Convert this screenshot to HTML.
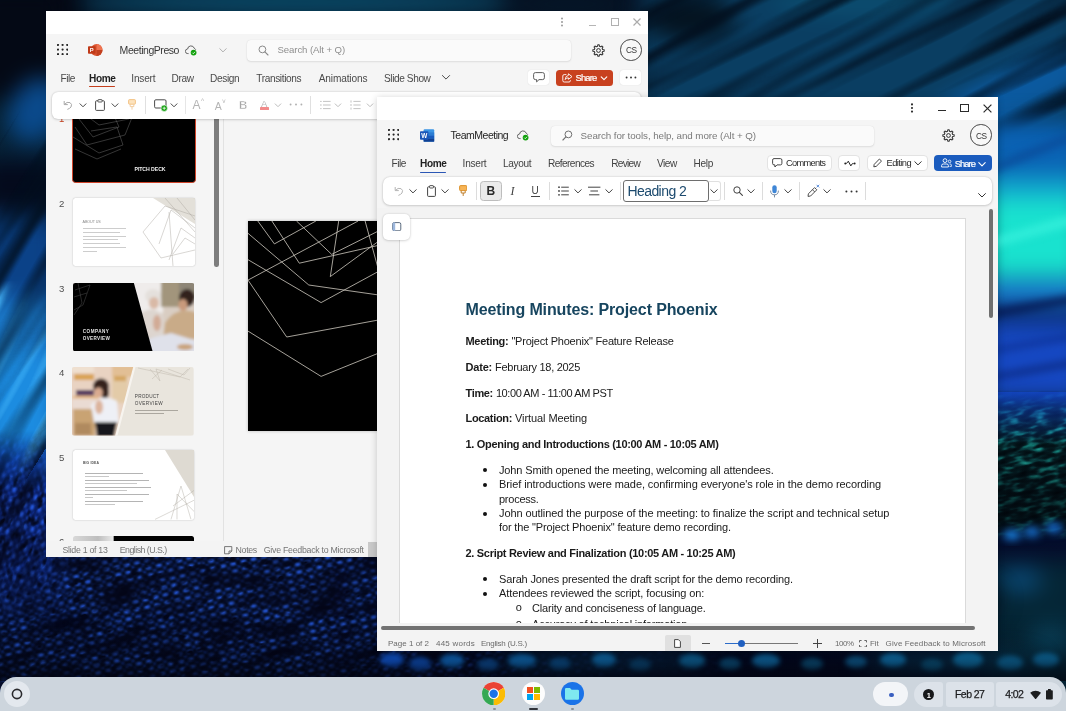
<!DOCTYPE html>
<html><head><meta charset="utf-8">
<style>
*{box-sizing:border-box;margin:0;padding:0}
html,body{width:1066px;height:711px;overflow:hidden;background:#021826}
body{font-family:"Liberation Sans",sans-serif;position:relative;color:#242424}
.abs,.t{position:absolute}
.t{white-space:nowrap;line-height:1}
#ppt,#word,#shelf{will-change:transform}
#wall{position:absolute;left:0;top:0;width:1066px;height:711px;overflow:hidden;background:#03131f}
/* windows */
#ppt{position:absolute;left:46px;top:11px;width:602px;height:545.8px;background:#f5f5f5;overflow:hidden}
#word{position:absolute;left:377px;top:97px;width:621px;height:554px;background:#f5f5f5;overflow:hidden;box-shadow:0 1px 7px rgba(0,0,0,.2)}
.tb{position:absolute;left:0;top:0;width:100%;height:23px;background:#fff}
#shelf{position:absolute;left:0;top:677px;width:1066px;height:34px;background:#cdd5dd;border-radius:16px 16px 0 0}
</style></head><body>
<div id="wall">
<svg class="abs" style="left:0;top:0" width="1066" height="711" viewBox="0 0 1066 711" color-interpolation-filters="sRGB">
<defs>
<filter id="b12" x="-30%" y="-30%" width="160%" height="160%"><feGaussianBlur stdDeviation="11"/></filter>
<filter id="b7" x="-30%" y="-30%" width="160%" height="160%"><feGaussianBlur stdDeviation="7"/></filter>
<filter id="b25" x="-30%" y="-30%" width="160%" height="160%"><feGaussianBlur stdDeviation="2.6"/></filter>
<filter id="b4" x="-30%" y="-30%" width="160%" height="160%"><feGaussianBlur stdDeviation="4"/></filter>
<filter id="b1" x="-5%" y="-5%" width="110%" height="110%"><feGaussianBlur stdDeviation="1.2"/></filter>
<!-- irregular dark patches overlay -->
<filter id="fpatch" x="0" y="0" width="100%" height="100%">
<feTurbulence type="fractalNoise" baseFrequency="0.02 0.06" numOctaves="3" seed="7"/>
<feColorMatrix type="matrix" values="0 0 0 0 0.012  0 0 0 0 0.02  0 0 0 0 0.09  2.4 0 0 0 -0.95"/>
</filter>
<filter id="fpatch2" x="0" y="0" width="100%" height="100%">
<feTurbulence type="fractalNoise" baseFrequency="0.1 0.17" numOctaves="2" seed="21"/>
<feColorMatrix type="matrix" values="0 0 0 0 0.012  0 0 0 0 0.025  0 0 0 0 0.1  3.2 0 0 0 -1.45"/>
</filter>
<!-- teal/green specks on black -->
<filter id="fspeck" x="0" y="0" width="100%" height="100%">
<feTurbulence type="fractalNoise" baseFrequency="0.07 0.2" numOctaves="2" seed="3"/>
<feColorMatrix type="matrix" values="1 0 0 0 0  1 0 0 0 0  1 0 0 0 0  0 0 0 0 1"/>
<feComponentTransfer>
<feFuncR type="table" tableValues="0 0 0 0.01 0.015 0.02 0.04 0.07 0.12 0.16 0.16"/>
<feFuncG type="table" tableValues="0.01 0.02 0.04 0.06 0.08 0.12 0.27 0.46 0.62 0.75 0.8"/>
<feFuncB type="table" tableValues="0.02 0.03 0.06 0.08 0.10 0.14 0.28 0.44 0.58 0.7 0.75"/>
</feComponentTransfer>
<feGaussianBlur stdDeviation=".6"/>
</filter>
<!-- dark streak overlay (long thin noise) -->
<filter id="fstreak" x="0" y="0" width="100%" height="100%">
<feTurbulence type="fractalNoise" baseFrequency="0.003 0.05" numOctaves="2" seed="11"/>
<feColorMatrix type="matrix" values="0 0 0 0 0.01  0 0 0 0 0.06  0 0 0 0 0.12  2.6 0 0 0 -1.05"/>
</filter>
<filter id="fstreakL" x="0" y="0" width="100%" height="100%">
<feTurbulence type="fractalNoise" baseFrequency="0.003 0.06" numOctaves="2" seed="5"/>
<feColorMatrix type="matrix" values="0 0 0 0 0.3  0 0 0 0 0.75  0 0 0 0 1  3.4 0 0 0 -1.7"/>
</filter>
<pattern id="dots" width="10.4" height="7.6" patternUnits="userSpaceOnUse"><ellipse cx="3.6" cy="2.4" rx="3.2" ry="1.7" fill="#2a64fa"/><ellipse cx="8.8" cy="6.2" rx="1.9" ry="1.1" fill="#1a46cc"/></pattern>
<linearGradient id="bg" x1="0" y1="0" x2="0" y2="1"><stop offset="0" stop-color="#050c1c"/><stop offset=".14" stop-color="#06202f"/><stop offset=".5" stop-color="#082a5c"/><stop offset=".76" stop-color="#050c2c"/><stop offset="1" stop-color="#03081c"/></linearGradient>
<linearGradient id="fadeB" x1="0" y1="0" x2="0" y2="1"><stop offset="0" stop-color="#02040e" stop-opacity="0"/><stop offset=".6" stop-color="#02040e" stop-opacity=".3"/><stop offset="1" stop-color="#02040e" stop-opacity=".92"/></linearGradient>
<linearGradient id="gR" x1="0" y1="0" x2="1" y2="0"><stop offset="0" stop-color="#fff"/><stop offset=".3" stop-color="#fff"/><stop offset=".42" stop-color="#fff" stop-opacity=".6"/><stop offset=".58" stop-color="#fff" stop-opacity=".15"/><stop offset=".75" stop-color="#fff" stop-opacity="0"/></linearGradient>
<linearGradient id="gLT" x1="0" y1="0" x2="0" y2="1"><stop offset="0" stop-color="#fff" stop-opacity="0"/><stop offset=".22" stop-color="#fff"/><stop offset=".45" stop-color="#fff"/><stop offset=".72" stop-color="#fff" stop-opacity="0"/><stop offset="1" stop-color="#fff" stop-opacity="0"/></linearGradient>
<linearGradient id="gSp" x1="0" y1="0" x2="0" y2="1"><stop offset="0" stop-color="#fff" stop-opacity="0"/><stop offset=".12" stop-color="#fff"/><stop offset=".86" stop-color="#fff"/><stop offset="1" stop-color="#fff" stop-opacity="0"/></linearGradient>
<linearGradient id="gTR" x1="0" y1="0" x2="0" y2="1"><stop offset="0" stop-color="#fff"/><stop offset=".65" stop-color="#fff"/><stop offset="1" stop-color="#fff" stop-opacity="0"/></linearGradient>
<linearGradient id="gDk" x1="0" y1="0" x2="0" y2="1"><stop offset="0" stop-color="#02060c" stop-opacity="0"/><stop offset=".6" stop-color="#02060c" stop-opacity=".6"/><stop offset=".85" stop-color="#02060c" stop-opacity=".5"/><stop offset="1" stop-color="#02060c" stop-opacity="0"/></linearGradient>
<linearGradient id="gBl" x1="0" y1="0" x2="0" y2="1"><stop offset="0" stop-color="#1246c8" stop-opacity=".75"/><stop offset="1" stop-color="#1246c8" stop-opacity="0"/></linearGradient>
<mask id="mBot" maskUnits="userSpaceOnUse" x="0" y="500" width="1066" height="211"><rect x="0" y="500" width="1066" height="211" fill="url(#gR)"/></mask>
<mask id="mLeft" maskUnits="userSpaceOnUse" x="0" y="430" width="80" height="281"><rect x="0" y="430" width="80" height="281" fill="url(#gLT)"/></mask>
<mask id="mSp" maskUnits="userSpaceOnUse" x="990" y="390" width="76" height="150"><rect x="990" y="390" width="76" height="150" fill="url(#gSp)"/></mask>
<mask id="mTR" maskUnits="userSpaceOnUse" x="640" y="0" width="426" height="200"><rect x="640" y="0" width="426" height="200" fill="url(#gTR)"/></mask>
<linearGradient id="gLH" x1="0" y1="0" x2="1" y2="0"><stop offset="0" stop-color="#fff"/><stop offset=".5" stop-color="#fff"/><stop offset="1" stop-color="#fff" stop-opacity="0"/></linearGradient>
<mask id="mLH" maskUnits="userSpaceOnUse" x="0" y="430" width="80" height="281"><rect x="0" y="430" width="80" height="281" fill="url(#gLH)"/></mask>
<mask id="mLL" maskUnits="userSpaceOnUse" x="0" y="280" width="60" height="200"><rect x="0" y="280" width="60" height="200" fill="url(#gSp)"/></mask>
<mask id="mLS" maskUnits="userSpaceOnUse" x="0" y="60" width="60" height="470"><rect x="0" y="60" width="60" height="470" fill="url(#gSp)"/></mask>
</defs>
<rect width="1066" height="711" fill="url(#bg)"/>
<!-- top band -->
<g filter="url(#b12)">
<ellipse cx="300" cy="2" rx="230" ry="15" fill="#0a4a68"/>
<ellipse cx="25" cy="20" rx="60" ry="50" fill="#040814"/>
<ellipse cx="570" cy="4" rx="70" ry="12" fill="#06182a"/>
</g>
<!-- top-right teal field -->
<g filter="url(#b12)">
<rect x="640" y="-20" width="440" height="150" fill="#0a3e62"/>
<ellipse cx="690" cy="18" rx="46" ry="24" fill="#041320"/>
<ellipse cx="860" cy="-2" rx="90" ry="18" fill="#0b4d70"/>
<ellipse cx="1010" cy="95" rx="110" ry="24" fill="#0b5aa0" transform="rotate(-24 1010 95)"/>
</g>
<g mask="url(#mTR)"><g transform="rotate(-27 850 50)"><rect x="540" y="-180" width="720" height="480" filter="url(#fstreak)"/></g></g>
<!-- right strip colour field -->
<g filter="url(#b12)">
<rect x="985" y="120" width="100" height="70" fill="#0a62b4"/>
<rect x="985" y="175" width="100" height="30" fill="#10a4cc"/>
<rect x="985" y="198" width="100" height="80" fill="#19e2cf"/>
<rect x="985" y="281" width="100" height="22" fill="#1a84da"/>
<rect x="985" y="304" width="100" height="14" fill="#0a2a70"/>
<rect x="985" y="322" width="100" height="78" fill="#1648c2"/>
<rect x="985" y="404" width="100" height="120" fill="#04161c"/>
</g>
<g filter="url(#b4)">
<rect x="985" y="303" width="100" height="8" fill="#061850" transform="rotate(-10 1030 307)"/>
<rect x="985" y="342" width="100" height="4" fill="#0a2a86" transform="rotate(-10 1030 344)"/>
<rect x="985" y="368" width="100" height="5" fill="#0a2476" transform="rotate(-10 1030 370)"/>
<rect x="985" y="228" width="100" height="8" fill="#36f0dc" transform="rotate(-16 1030 232)"/>
<rect x="985" y="150" width="100" height="7" fill="#0a4a98" transform="rotate(-22 1030 154)"/>
</g>
<g mask="url(#mSp)"><g transform="rotate(-12 1030 460)"><rect x="960" y="370" width="140" height="190" filter="url(#fspeck)"/></g></g>
<rect x="990" y="440" width="80" height="100" fill="url(#gDk)"/>
<rect x="990" y="392" width="80" height="52" fill="url(#gBl)"/>
<g filter="url(#b4)">
<ellipse cx="1012" cy="535" rx="9" ry="5" fill="#1a84ec"/><ellipse cx="1032" cy="532" rx="8" ry="5" fill="#1878e0"/><ellipse cx="1054" cy="528" rx="9" ry="5" fill="#166cd8"/>
</g>
<g filter="url(#b12)">
<rect x="985" y="560" width="100" height="140" fill="#052636"/>
<ellipse cx="1020" cy="580" rx="22" ry="12" fill="#0a4a78"/><ellipse cx="1050" cy="640" rx="22" ry="14" fill="#0a4660"/>
</g>
<!-- left strip colour field -->
<g filter="url(#b12)">
<rect x="-20" y="-10" width="80" height="110" fill="#040915"/>
<ellipse cx="36" cy="110" rx="26" ry="34" fill="#0a4a8c" transform="rotate(30 36 110)"/>
<rect x="-20" y="160" width="80" height="50" fill="#040a1c"/>
<rect x="-20" y="220" width="80" height="80" fill="#0b4288"/>
<rect x="-20" y="300" width="80" height="60" fill="#1a78c8"/>
<rect x="-20" y="350" width="80" height="100" fill="#1c8ce0"/>
<rect x="-20" y="450" width="80" height="60" fill="#1050c8"/>
</g>
<g mask="url(#mLL)"><g transform="rotate(-63 20 380)"><rect x="-160" y="300" width="380" height="170" filter="url(#fstreakL)"/></g></g>
<g mask="url(#mLS)">
<g transform="rotate(-58 20 300)"><rect x="-300" y="200" width="640" height="200" filter="url(#fstreak)" opacity=".8"/></g>
</g>
<!-- lower-left: dotted feather texture -->
<g mask="url(#mBot)">
<rect x="0" y="520" width="1066" height="191" fill="#020818"/>
<g transform="rotate(-13 200 610)"><rect x="-60" y="470" width="800" height="320" fill="url(#dots)" filter="url(#b1)"/><rect x="-60" y="470" width="800" height="320" filter="url(#fpatch)"/><rect x="-60" y="470" width="800" height="320" filter="url(#fpatch2)"/></g>
</g>
<g mask="url(#mLeft)"><g mask="url(#mLH)">
<rect x="0" y="430" width="80" height="281" fill="#071a5c"/>
<g transform="rotate(-70 24 560)"><rect x="-160" y="440" width="380" height="240" fill="url(#dots)" filter="url(#b1)"/><rect x="-160" y="440" width="380" height="240" filter="url(#fpatch)"/><rect x="-160" y="440" width="380" height="240" filter="url(#fpatch2)"/></g>
</g></g>
<g filter="url(#b12)">
<ellipse cx="600" cy="664" rx="110" ry="9" fill="#0a3c58" opacity=".7"/>
<ellipse cx="950" cy="664" rx="90" ry="12" fill="#093a54" opacity=".9"/>
<ellipse cx="700" cy="600" rx="300" ry="40" fill="#04121e"/>
</g>
<g filter="url(#b25)" opacity=".95"><ellipse cx="392" cy="660" rx="12" ry="7" fill="#1264ee"/><ellipse cx="420" cy="664" rx="11" ry="7" fill="#105cd2"/><ellipse cx="452" cy="661" rx="12" ry="7" fill="#1076d5"/><ellipse cx="488" cy="665" rx="11" ry="6" fill="#0f5cad"/><ellipse cx="522" cy="661" rx="14" ry="7" fill="#1076c6"/><ellipse cx="560" cy="664" rx="11" ry="6" fill="#0d5c9e"/><ellipse cx="604" cy="660" rx="12" ry="7" fill="#1079c0"/><ellipse cx="640" cy="665" rx="11" ry="6" fill="#0c5385"/><ellipse cx="692" cy="661" rx="13" ry="7" fill="#0f73ad"/><ellipse cx="730" cy="664" rx="11" ry="6" fill="#0c5c8b"/><ellipse cx="766" cy="661" rx="14" ry="7" fill="#1079ba"/><ellipse cx="812" cy="664" rx="11" ry="6" fill="#0c5c88"/><ellipse cx="856" cy="662" rx="11" ry="6" fill="#0f69a1"/><ellipse cx="893" cy="660" rx="13" ry="7" fill="#1080c0"/><ellipse cx="932" cy="665" rx="11" ry="6" fill="#0c608b"/><ellipse cx="968" cy="660" rx="15" ry="8" fill="#1080ba"/><ellipse cx="1010" cy="663" rx="13" ry="7" fill="#0f76ad"/><ellipse cx="1046" cy="660" rx="13" ry="7" fill="#0f76ad"/></g>
<rect x="0" y="615" width="1066" height="66" fill="url(#fadeB)" opacity=".8"/>
</svg>
</div>

<div id="ppt">
<div class="tb"></div>
<svg class="abs" style="left:514.0px;top:6.0px;" width="4" height="10" viewBox="0 0 4 10"><circle cx="2" cy="1.4" r="1" fill="#9a9a9a"/><circle cx="2" cy="5" r="1" fill="#9a9a9a"/><circle cx="2" cy="8.6" r="1" fill="#9a9a9a"/></svg>
<div class="abs" style="left:542.5px;top:13.5px;width:7.5px;height:1.2px;background:#b5b5b5"></div>
<div class="abs" style="left:565.0px;top:6.5px;width:8.0px;height:8.5px;border:1.2px solid #b0b0b0"></div>
<svg class="abs" style="left:587.0px;top:7.0px;" width="8" height="8" viewBox="0 0 8 8"><path d="M.5 .5L7.5 7.5M7.5 .5L.5 7.5" stroke="#ababab" stroke-width="1.2"/></svg>
<svg class="abs" style="left:10.9px;top:32.9px;" width="11.2" height="11.2" viewBox="0 0 11.2 11.2"><circle cx="1.0" cy="1.0" r="1.08" fill="#262626"/><circle cx="1.0" cy="5.6" r="1.08" fill="#262626"/><circle cx="1.0" cy="10.2" r="1.08" fill="#262626"/><circle cx="5.6" cy="1.0" r="1.08" fill="#262626"/><circle cx="5.6" cy="5.6" r="1.08" fill="#262626"/><circle cx="5.6" cy="10.2" r="1.08" fill="#262626"/><circle cx="10.2" cy="1.0" r="1.08" fill="#262626"/><circle cx="10.2" cy="5.6" r="1.08" fill="#262626"/><circle cx="10.2" cy="10.2" r="1.08" fill="#262626"/></svg>
<svg class="abs" style="left:42.4px;top:33.0px;" width="14.6" height="12" viewBox="0 0 14.6 12"><circle cx="8.6" cy="6" r="5.9" fill="#d9532f"/><path d="M8.6 .1 A5.9 5.9 0 0 1 14.5 6 H8.6Z" fill="#ee7350"/><path d="M8.6 11.9 A5.9 5.9 0 0 0 14.5 6 H8.6Z" fill="#c2401f"/><rect x="0" y="2.2" width="7.6" height="7.6" rx=".8" fill="#c03a18"/><text x="3.6" y="8.2" font-family="Liberation Sans" font-size="5.8" font-weight="700" fill="#fff" text-anchor="middle">P</text></svg>
<span class="t" style="left:73.6px;top:33.7px;font-size:10.5px;color:#383838;letter-spacing:-0.450px;">MeetingPreso</span>
<svg class="abs" style="left:139.2px;top:33.6px;" width="13" height="11" viewBox="0 0 13 11"><path d="M3.2 8.6 H2.8 A2.3 2.3 0 0 1 2.6 4 A3.4 3.4 0 0 1 9.2 3.2 A2.6 2.6 0 0 1 10.6 4.4" fill="none" stroke="#555" stroke-width=".9" stroke-linecap="round"/><circle cx="8.6" cy="7.6" r="2.9" fill="#13a10e"/><path d="M7.3 7.7 L8.3 8.7 L10 6.8" fill="none" stroke="#fff" stroke-width=".8"/></svg>
<svg class="abs" style="left:172.0px;top:33.8px;" width="10" height="10" viewBox="0 0 10 10"><path d="M1.7999999999999998 3.6999999999999997L5 6.8999999999999995L8.2 3.6999999999999997" fill="none" stroke="#b0b0b0" stroke-width="1" stroke-linecap="round" stroke-linejoin="round"/></svg>
<div class="abs" style="left:200.8px;top:28.5px;width:324.0px;height:21.0px;background:#fafafa;border-radius:4px;box-shadow:0 0 1px rgba(0,0,0,.14),0 1px 2px rgba(0,0,0,.09)"></div>
<svg class="abs" style="left:211.5px;top:33.5px;" width="11" height="11" viewBox="0 0 11 11"><circle cx="4.4" cy="4.4" r="3.4" fill="none" stroke="#8a8a8a" stroke-width="1"/><path d="M6.9 6.9L10 10" stroke="#8a8a8a" stroke-width="1.1" stroke-linecap="round"/></svg>
<span class="t" style="left:231.5px;top:34.3px;font-size:9.6px;color:#8f8f8f;letter-spacing:-0.097px;">Search (Alt + Q)</span>
<svg class="abs" style="left:545.5px;top:32.5px;" width="13" height="13" viewBox="0 0 13 13"><g transform="translate(6.5 6.5)"><path d="M-1.00 -4.18 L-0.71 -5.66 L0.71 -5.66 L1.00 -4.18 L2.25 -3.67 L3.49 -4.50 L4.50 -3.49 L3.67 -2.25 L4.18 -1.00 L5.66 -0.71 L5.66 0.71 L4.18 1.00 L3.67 2.25 L4.50 3.49 L3.49 4.50 L2.25 3.67 L1.00 4.18 L0.71 5.66 L-0.71 5.66 L-1.00 4.18 L-2.25 3.67 L-3.49 4.50 L-4.50 3.49 L-3.67 2.25 L-4.18 1.00 L-5.66 0.71 L-5.66 -0.71 L-4.18 -1.00 L-3.67 -2.25 L-4.50 -3.49 L-3.49 -4.50 L-2.25 -3.67Z" fill="none" stroke="#333" stroke-width="1.05" stroke-linejoin="round"/><circle r="1.9" fill="none" stroke="#333" stroke-width="1"/></g></svg>
<div class="abs" style="left:574.3px;top:28.3px;width:21.4px;height:21.4px;border-radius:50%;border:.9px solid #444;background:#f8f8f8"></div>
<span class="t" style="left:580.0px;top:35.3px;font-size:8.3px;color:#333;letter-spacing:-0.466px;">CS</span>
<span class="t" style="left:14.5px;top:62.5px;font-size:10.1px;color:#4a4a4a;letter-spacing:-0.441px;">File</span>
<span class="t" style="left:43.0px;top:62.5px;font-size:10.1px;font-weight:700;color:#1f1f1f;letter-spacing:-0.412px;">Home</span>
<span class="t" style="left:85.3px;top:62.5px;font-size:10.1px;color:#4a4a4a;letter-spacing:-0.208px;">Insert</span>
<span class="t" style="left:125.5px;top:62.5px;font-size:10.1px;color:#4a4a4a;letter-spacing:-0.341px;">Draw</span>
<span class="t" style="left:164.0px;top:62.5px;font-size:10.1px;color:#4a4a4a;letter-spacing:-0.337px;">Design</span>
<span class="t" style="left:210.3px;top:62.5px;font-size:10.1px;color:#4a4a4a;letter-spacing:-0.373px;">Transitions</span>
<span class="t" style="left:272.7px;top:62.5px;font-size:10.1px;color:#4a4a4a;letter-spacing:-0.124px;">Animations</span>
<span class="t" style="left:338.0px;top:62.5px;font-size:10.1px;color:#4a4a4a;letter-spacing:-0.400px;">Slide Show</span>
<div class="abs" style="left:43.0px;top:74.8px;width:26.4px;height:1.7px;background:#c43e1c;border-radius:1px"></div>
<svg class="abs" style="left:394.7px;top:61.4px;" width="10" height="10" viewBox="0 0 10 10"><path d="M1.4 3.5L5 7.1L8.6 3.5" fill="none" stroke="#4a4a4a" stroke-width="1" stroke-linecap="round" stroke-linejoin="round"/></svg>
<div class="abs" style="left:482.0px;top:58.8px;width:21.3px;height:15.6px;background:#fff;border-radius:3px;box-shadow:0 0 1px rgba(0,0,0,.18)"></div>
<svg class="abs" style="left:486.6px;top:61.4px;" width="12" height="11" viewBox="0 0 12 11"><path d="M2.4 .6 H9.6 Q11.4 .6 11.4 2.4 V5.8 Q11.4 7.6 9.6 7.6 H6 L3.6 9.9 V7.6 H2.4 Q.6 7.6 .6 5.8 V2.4 Q.6 .6 2.4 .6Z" fill="none" stroke="#555" stroke-width=".95" stroke-linejoin="round"/></svg>
<div class="abs" style="left:510.0px;top:58.5px;width:57.2px;height:16.3px;background:#c8411f;border-radius:3.5px"></div>
<svg class="abs" style="left:515.5px;top:61.6px;" width="11" height="10" viewBox="0 0 11 10"><path d="M4.4 1.6 H2.2 Q.8 1.6 .8 3 V7.6 Q.8 9 2.2 9 H7 Q8.4 9 8.4 7.6 V7" fill="none" stroke="#fff" stroke-width=".9"/><path d="M6.4 .8 L10 3.6 L6.4 6.3 V4.8 Q4.2 4.8 3.2 6.6 Q3.4 2.8 6.4 2.4Z" fill="none" stroke="#fff" stroke-width=".9" stroke-linejoin="round"/></svg>
<span class="t" style="left:529.6px;top:62.2px;font-size:9.4px;color:#fff;letter-spacing:-0.866px;-webkit-text-stroke:.2px #fff;">Share</span>
<svg class="abs" style="left:553.2px;top:62.0px;" width="10" height="10" viewBox="0 0 10 10"><path d="M2.2 3.9L5 6.7L7.8 3.9" fill="none" stroke="#fff" stroke-width="1.1" stroke-linecap="round" stroke-linejoin="round"/></svg>
<div class="abs" style="left:574.0px;top:58.8px;width:21.0px;height:15.6px;background:#fff;border-radius:3px;box-shadow:0 0 1px rgba(0,0,0,.18)"></div>
<svg class="abs" style="left:578.5px;top:65.4px;" width="12" height="3" viewBox="0 0 12 3"><circle cx="1.6" cy="1.5" r=".95" fill="#333"/><circle cx="6" cy="1.5" r=".95" fill="#333"/><circle cx="10.4" cy="1.5" r=".95" fill="#333"/></svg>
<div class="abs" style="left:177.0px;top:81.0px;width:1.2px;height:452.0px;background:#e2e2e2"></div>
<div class="abs" style="left:168.2px;top:99.0px;width:4.6px;height:157.4px;background:#7d7d7d;border-radius:2.3px"></div>
<span class="t" style="left:13.0px;top:103.4px;font-size:9.6px;color:#c43e1c;">1</span>
<span class="t" style="left:13.0px;top:188.1px;font-size:9.6px;color:#505050;">2</span>
<span class="t" style="left:13.0px;top:272.7px;font-size:9.6px;color:#505050;">3</span>
<span class="t" style="left:13.0px;top:357.2px;font-size:9.6px;color:#505050;">4</span>
<span class="t" style="left:13.0px;top:441.7px;font-size:9.6px;color:#505050;">5</span>
<span class="t" style="left:13.0px;top:526.4px;font-size:9.6px;color:#505050;">6</span>
<div class="abs" style="left:25.6px;top:101.0px;width:124.6px;height:71.2px;background:#000;border:1.4px solid #d0442a;border-radius:3.5px"></div>
<svg class="abs" style="left:27.0px;top:102.4px;" width="121.8" height="68.4" viewBox="0 0 121.8 68.4"><g fill="none" stroke="#6b6b6b" stroke-width=".5"><path d="M2 14 L14 32 L52 22 L60 2"/><path d="M6 6 L20 24 L46 14 L40 0"/><path d="M0 24 L26 40 L50 32 L44 14 L18 18"/><path d="M10 0 L26 12 L56 6"/><path d="M2 36 L24 46 L48 36"/></g></svg>
<span class="t" style="left:88.5px;top:155.8px;font-size:5.2px;font-weight:700;color:#f0f0f0;letter-spacing:-0.070px;">PITCH DECK</span>
<div class="abs" style="left:26.8px;top:187.0px;width:122.0px;height:68.4px;background:#fff;border-radius:2.5px;box-shadow:0 0 1.5px rgba(0,0,0,.3)"></div>
<svg class="abs" style="left:26.8px;top:187.0px;" width="122" height="68.4" viewBox="0 0 122 68.4"><path d="M80 0 H122 V26 Z" fill="#dcd8cf" opacity=".8"/><g fill="none" stroke="#a9a69e" stroke-width=".45"><path d="M70 34 L92 8 L122 18"/><path d="M70 34 L88 60 L122 52"/><path d="M86 46 L98 12 L122 30"/><path d="M92 0 L122 34"/><path d="M96 62 L108 30 L122 40"/><path d="M100 56 L112 40 L122 46"/><path d="M104 0 L122 22"/><path d="M96 14 L100 68"/></g></svg>
<span class="t" style="left:36.6px;top:210.3px;font-size:3.7px;color:#888;letter-spacing:-0.100px;">ABOUT US</span>
<div class="abs" style="left:36.8px;top:217.0px;width:43.0px;height:1.1px;background:#cdcdcd"></div>
<div class="abs" style="left:36.8px;top:220.8px;width:37.0px;height:1.1px;background:#cdcdcd"></div>
<div class="abs" style="left:36.8px;top:224.5px;width:43.0px;height:1.1px;background:#cdcdcd"></div>
<div class="abs" style="left:36.8px;top:228.2px;width:35.0px;height:1.1px;background:#cdcdcd"></div>
<div class="abs" style="left:36.8px;top:232.0px;width:37.0px;height:1.1px;background:#cdcdcd"></div>
<div class="abs" style="left:36.8px;top:235.8px;width:43.0px;height:1.1px;background:#cdcdcd"></div>
<div class="abs" style="left:36.8px;top:239.5px;width:14.0px;height:1.1px;background:#cdcdcd"></div>
<svg class="abs" style="left:26.8px;top:271.5px;" width="121.6" height="68.4" viewBox="0 0 121.6 68.4"><defs><filter id="pb"><feGaussianBlur stdDeviation="1.5"/></filter><filter id="pb2"><feGaussianBlur stdDeviation=".8"/></filter><clipPath id="c3"><rect width="121.6" height="68.4" rx="2.5"/></clipPath></defs>
<g clip-path="url(#c3)"><g filter="url(#pb)">
<rect x="-5" y="-5" width="131.6" height="78.4" fill="#d9cdc2"/>
<rect x="56" y="-4" width="34" height="34" fill="#efeceb"/>
<rect x="88" y="-4" width="20" height="28" fill="#a2957c"/><rect x="106" y="-4" width="20" height="20" fill="#8d8576"/>
<ellipse cx="80" cy="13" rx="8" ry="7" fill="#e4e0dc"/><ellipse cx="81" cy="20" rx="5" ry="6" fill="#d9b9a6"/>
<path d="M68 30 Q80 22 90 32 L92 54 H70Z" fill="#ddd5cf"/><ellipse cx="84" cy="40" rx="4" ry="8" fill="#d2ab96"/>
<ellipse cx="114" cy="15" rx="8" ry="9" fill="#33231d"/><ellipse cx="110" cy="22" rx="4.6" ry="6" fill="#c99a7c"/>
<path d="M92 40 Q104 22 124 30 V56 H90Z" fill="#c9ab88"/>
<path d="M74 56 L98 50 L124 58 V72 H72Z" fill="#dfe1ea"/><ellipse cx="112" cy="64" rx="8" ry="3" fill="#c9a27a"/>
</g>
<path d="M-1 -1 H60.6 L79.8 69 H-1Z" fill="#000"/>
<g fill="none" stroke="#4e4e4e" stroke-width=".5"><path d="M2 7 L17 2 L10 22 L1 27"/><path d="M5 0 L9 20 L1 32"/><path d="M1 14 L14 10"/></g></g></svg>
<span class="t" style="left:36.8px;top:318.7px;font-size:4.6px;font-weight:700;color:#e4e4e4;letter-spacing:0.494px;">COMPANY</span>
<span class="t" style="left:36.8px;top:325.9px;font-size:4.6px;font-weight:700;color:#e4e4e4;letter-spacing:0.339px;">OVERVIEW</span>
<svg class="abs" style="left:26.4px;top:356.2px;" width="121.8" height="68.8" viewBox="0 0 121.8 68.8"><defs><filter id="pc"><feGaussianBlur stdDeviation="1.4"/></filter><clipPath id="c4"><path d="M0 0 H61.2 L43.2 68.8 H0Z"/></clipPath><clipPath id="c4o"><rect width="121.8" height="68.8" rx="2.5"/></clipPath></defs>
<g clip-path="url(#c4o)"><rect width="121.8" height="68.8" fill="#e9e5dd"/>
<path d="M59 0 H63.5 L45.5 68.8 H41Z" fill="#f7f4ef"/>
<g clip-path="url(#c4)"><g filter="url(#pc)">
<rect x="-5" y="-5" width="80" height="80" fill="#e9d3c2"/>
<rect x="-2" y="-2" width="24" height="8" fill="#efe0d0"/><rect x="40" y="-2" width="24" height="12" fill="#e2bf95"/>
<rect x="2" y="7" width="20" height="6" fill="#d9a354"/><rect x="40" y="10" width="16" height="26" fill="#e3cba8"/><rect x="42" y="9" width="12" height="5" fill="#d4a660"/>
<rect x="4" y="23" width="18" height="5.5" fill="#50305c"/><rect x="1" y="29" width="26" height="2.2" fill="#e2b070"/>
<rect x="0" y="32" width="22" height="10" fill="#eadbd3"/>
<rect x="1" y="42" width="22" height="27" fill="#c9a373"/><rect x="3" y="56" width="16" height="12" fill="#b08a5e"/>
<ellipse cx="29" cy="19" rx="8" ry="7.5" fill="#35231e"/><ellipse cx="33" cy="25" rx="4" ry="7" fill="#35231e"/><ellipse cx="26.5" cy="25.5" rx="4.2" ry="5" fill="#d9aa90"/>
<path d="M19 38 Q30 26 45 34 L47 56 H22Z" fill="#eef0f6"/><ellipse cx="27" cy="40" rx="4" ry="7" fill="#dcb39c"/>
<path d="M23 55 H45 L42 70 H25Z" fill="#17171a"/>
</g></g>
<g fill="none" stroke="#bbb6ab" stroke-width=".45"><path d="M66 1 L108 10 L116 2"/><path d="M78 2 L88 14 L84 2 L118 13"/><path d="M80 12 L90 3"/><path d="M96 2 L112 8 L118 1"/></g></g></svg>
<span class="t" style="left:88.8px;top:383.8px;font-size:4.7px;color:#444;letter-spacing:0.202px;">PRODUCT</span>
<span class="t" style="left:88.8px;top:391.0px;font-size:4.7px;color:#444;letter-spacing:0.377px;">OVERVIEW</span>
<div class="abs" style="left:88.8px;top:398.9px;width:43.0px;height:0.9px;background:#aba79f"></div>
<div class="abs" style="left:88.8px;top:401.8px;width:29.0px;height:0.9px;background:#aba79f"></div>
<div class="abs" style="left:26.6px;top:439.4px;width:121.6px;height:69.4px;background:#fff;border-radius:2.5px;box-shadow:0 0 1.5px rgba(0,0,0,.3)"></div>
<svg class="abs" style="left:26.6px;top:439.4px;" width="121.6" height="69.4" viewBox="0 0 121.6 69.4"><path d="M92 0 H121.6 V48 Z" fill="#dedad2"/><g fill="none" stroke="#b8b5ad" stroke-width=".5"><path d="M82 69.4 L121.6 50"/><path d="M98 69.4 L108 36 L118 69.4"/><path d="M104 69.4 L104 44 L121.6 62"/><path d="M100 56 L121.6 40"/></g></svg>
<span class="t" style="left:37.0px;top:450.7px;font-size:3.4px;font-weight:700;color:#555;letter-spacing:0.115px;">BIG IDEA</span>
<div class="abs" style="left:38.5px;top:462.0px;width:58.0px;height:1.0px;background:#b4b4b4"></div>
<div class="abs" style="left:38.5px;top:464.6px;width:24.0px;height:1.0px;background:#c8c8c8"></div>
<div class="abs" style="left:38.5px;top:469.1px;width:64.0px;height:1.0px;background:#b4b4b4"></div>
<div class="abs" style="left:38.5px;top:471.7px;width:52.0px;height:1.0px;background:#c8c8c8"></div>
<div class="abs" style="left:38.5px;top:476.2px;width:66.0px;height:1.0px;background:#b4b4b4"></div>
<div class="abs" style="left:38.5px;top:478.8px;width:42.0px;height:1.0px;background:#c8c8c8"></div>
<div class="abs" style="left:38.5px;top:483.3px;width:64.0px;height:1.0px;background:#b4b4b4"></div>
<div class="abs" style="left:38.5px;top:485.9px;width:8.0px;height:1.0px;background:#c8c8c8"></div>
<div class="abs" style="left:38.5px;top:490.4px;width:58.0px;height:1.0px;background:#b4b4b4"></div>
<div class="abs" style="left:38.5px;top:493.0px;width:30.0px;height:1.0px;background:#c8c8c8"></div>
<div class="abs" style="left:26.6px;top:524.8px;width:121.6px;height:12.0px;background:linear-gradient(90deg,#d8d8d8 0,#bdbdbd 25px,#e8e8e8 40px,#000 41.5px);border-radius:2.5px 2.5px 0 0"></div>
<div class="abs" style="left:201.8px;top:210.0px;width:140.0px;height:210.0px;background:#000;box-shadow:0 0 3px rgba(0,0,0,.25)"></div>
<svg class="abs" style="left:201.8px;top:210.0px;" width="140" height="210" viewBox="0 0 140 210"><g fill="none" stroke="#cfcac0" stroke-width=".8"><path d="M9.8 0.0 L26.4 22.9 L67.9 0.0"/><path d="M23.9 0.0 L51.3 42.2 L129.4 24.6"/><path d="M48.5 0.0 L83.7 33.4 L129.4 10.5"/><path d="M90.7 0.0 L82.3 55.6 L129.4 21.1"/><path d="M117.1 0.0 L130.1 47.5"/><path d="M0.0 12.3 L60.8 64.0 L129.4 73.8"/><path d="M0.0 38.7 L73.1 81.6 L129.4 51.0"/><path d="M0.0 59.1 L110.1 0.0"/><path d="M0.0 59.1 L38.7 116.0 L129.4 99.2"/><path d="M0.0 110.1 L73.1 155.4 L129.4 132.6"/></g></svg>
<div class="abs" style="left:5.8px;top:81.4px;width:589.0px;height:26.3px;background:#fff;border-radius:6px;box-shadow:0 0 2px rgba(0,0,0,.18),0 1px 3px rgba(0,0,0,.12)"></div>
<svg class="abs" style="left:17.0px;top:88.8px;" width="10" height="10" viewBox="0 0 10 10"><path d="M1.2 1 V4.6 H4.8" fill="none" stroke="#a8a8a8" stroke-width="1"/><path d="M1.4 4.4 Q4 1.4 7 2.6 Q9.6 4.2 8 7 Q7 8.4 4.4 9.4" fill="none" stroke="#a8a8a8" stroke-width="1"/></svg>
<svg class="abs" style="left:32.0px;top:88.8px;" width="10" height="10" viewBox="0 0 10 10"><path d="M2 3.8L5 6.8L8 3.8" fill="none" stroke="#4a4a4a" stroke-width="1" stroke-linecap="round" stroke-linejoin="round"/></svg>
<svg class="abs" style="left:49.0px;top:87.8px;" width="10" height="12" viewBox="0 0 10 12"><path d="M3 1.8 H1.4 Q.6 1.8 .6 2.6 V10.6 Q.6 11.4 1.4 11.4 H8.6 Q9.4 11.4 9.4 10.6 V2.6 Q9.4 1.8 8.6 1.8 H7" fill="none" stroke="#4a4a4a" stroke-width="1"/><rect x="3" y=".6" width="4" height="2.4" rx=".5" fill="none" stroke="#4a4a4a" stroke-width=".9"/></svg>
<svg class="abs" style="left:63.5px;top:88.8px;" width="10" height="10" viewBox="0 0 10 10"><path d="M2 3.8L5 6.8L8 3.8" fill="none" stroke="#4a4a4a" stroke-width="1" stroke-linecap="round" stroke-linejoin="round"/></svg>
<svg class="abs" style="left:81.6px;top:87.8px;" width="8" height="12" viewBox="0 0 8 12"><rect x=".6" y=".6" width="6.8" height="4.6" rx=".8" fill="#fde3bd" stroke="#f2bd7c" stroke-width=".9"/><path d="M2.2 5.4 V7.6 H5.8 V5.4 M4 7.6 V10.6" fill="none" stroke="#f0c99a" stroke-width=".9"/></svg>
<div class="abs" style="left:99.0px;top:84.8px;width:1.0px;height:18.0px;background:#e0e0e0"></div>
<svg class="abs" style="left:108.0px;top:87.8px;" width="14" height="13" viewBox="0 0 14 13"><rect x=".6" y=".8" width="11.4" height="8.2" rx="1.2" fill="none" stroke="#4a4a4a" stroke-width="1"/><circle cx="10.2" cy="9.2" r="3.2" fill="#13a10e" stroke="#fff" stroke-width=".6"/><path d="M10.2 7.6 V10.8 M8.6 9.2 H11.8" stroke="#fff" stroke-width=".8"/></svg>
<svg class="abs" style="left:122.7px;top:88.8px;" width="10" height="10" viewBox="0 0 10 10"><path d="M2 3.8L5 6.8L8 3.8" fill="none" stroke="#4a4a4a" stroke-width="1" stroke-linecap="round" stroke-linejoin="round"/></svg>
<div class="abs" style="left:138.5px;top:84.8px;width:1.0px;height:18.0px;background:#e6e6e6"></div>
<span class="t" style="left:146.5px;top:88.3px;font-size:12px;color:#b4b4b4;">A</span>
<span class="t" style="left:155.0px;top:87.0px;font-size:6.5px;color:#b4b4b4;">^</span>
<span class="t" style="left:168.8px;top:89.6px;font-size:10.5px;color:#b4b4b4;">A</span>
<span class="t" style="left:176.0px;top:87.5px;font-size:6.5px;color:#b4b4b4;">˅</span>
<span class="t" style="left:193.0px;top:88.8px;font-size:11.5px;font-weight:700;color:#a6a6a6;-webkit-text-stroke:.4px #fff;">B</span>
<span class="t" style="left:215.0px;top:87.6px;font-size:9.5px;color:#b9b9b9;">A</span>
<div class="abs" style="left:214.0px;top:96.2px;width:9.4px;height:3.0px;background:#f28b8b;border-radius:.5px"></div>
<svg class="abs" style="left:227.0px;top:88.8px;" width="10" height="10" viewBox="0 0 10 10"><path d="M2.2 3.9L5 6.7L7.8 3.9" fill="none" stroke="#bdbdbd" stroke-width="1" stroke-linecap="round" stroke-linejoin="round"/></svg>
<svg class="abs" style="left:243.0px;top:92.3px;" width="14" height="3" viewBox="0 0 14 3"><circle cx="1.6" cy="1.5" r=".95" fill="#b0b0b0"/><circle cx="7" cy="1.5" r=".95" fill="#b0b0b0"/><circle cx="12.4" cy="1.5" r=".95" fill="#b0b0b0"/></svg>
<div class="abs" style="left:264.4px;top:84.8px;width:1.0px;height:18.0px;background:#e0e0e0"></div>
<svg class="abs" style="left:274.0px;top:88.8px;" width="11" height="10" viewBox="0 0 11 10"><g stroke="#bcbcbc" stroke-width=".9"><path d="M3 1.4 H10.6 M3 5 H10.6 M3 8.6 H10.6"/></g><g fill="#bcbcbc"><circle cx=".9" cy="1.4" r=".7"/><circle cx=".9" cy="5" r=".7"/><circle cx=".9" cy="8.6" r=".7"/></g></svg>
<svg class="abs" style="left:287.0px;top:88.8px;" width="10" height="10" viewBox="0 0 10 10"><path d="M2.2 3.9L5 6.7L7.8 3.9" fill="none" stroke="#bdbdbd" stroke-width="1" stroke-linecap="round" stroke-linejoin="round"/></svg>
<svg class="abs" style="left:304.4px;top:88.8px;" width="11" height="10" viewBox="0 0 11 10"><g stroke="#bcbcbc" stroke-width=".9"><path d="M3.4 1.4 H10.6 M3.4 5 H10.6 M3.4 8.6 H10.6 M1 .4 V2.6 M1 4 V6 M1 7.6 V9.6"/></g></svg>
<svg class="abs" style="left:319.3px;top:88.8px;" width="10" height="10" viewBox="0 0 10 10"><path d="M2.2 3.9L5 6.7L7.8 3.9" fill="none" stroke="#bdbdbd" stroke-width="1" stroke-linecap="round" stroke-linejoin="round"/></svg>
<div class="abs" style="left:0.0px;top:529.6px;width:602.0px;height:17.0px;background:#f4f4f4"></div>
<span class="t" style="left:16.5px;top:534.8px;font-size:8.8px;color:#757575;letter-spacing:-0.302px;">Slide 1 of 13</span>
<span class="t" style="left:73.7px;top:534.8px;font-size:8.8px;color:#757575;letter-spacing:-0.519px;">English (U.S.)</span>
<svg class="abs" style="left:178.2px;top:535.0px;" width="8.5" height="8.5" viewBox="0 0 8.5 8.5"><path d="M.6 .6 H7.8 V5 L5 7.8 H.6Z M7.8 5 H5 V7.8" fill="none" stroke="#6a6a6a" stroke-width=".9" stroke-linejoin="round"/></svg>
<span class="t" style="left:189.6px;top:534.8px;font-size:8.8px;color:#757575;letter-spacing:-0.357px;">Notes</span>
<span class="t" style="left:217.8px;top:534.8px;font-size:8.8px;color:#757575;letter-spacing:-0.272px;">Give Feedback to Microsoft</span>
<div class="abs" style="left:322.0px;top:530.6px;width:8.6px;height:16.0px;background:#c9c9c9"></div>
</div>

<div id="word">
<div class="tb"></div>
<svg class="abs" style="left:532.5px;top:5.6px;" width="4" height="10" viewBox="0 0 4 10"><circle cx="2" cy="1.4" r="1.05" fill="#2b2b2b"/><circle cx="2" cy="5" r="1.05" fill="#2b2b2b"/><circle cx="2" cy="8.6" r="1.05" fill="#2b2b2b"/></svg>
<div class="abs" style="left:561.4px;top:13.2px;width:7.8px;height:1.2px;background:#2b2b2b"></div>
<div class="abs" style="left:583.4px;top:6.8px;width:8.6px;height:8.6px;border:1.2px solid #2b2b2b"></div>
<svg class="abs" style="left:605.6px;top:6.8px;" width="9" height="9" viewBox="0 0 9 9"><path d="M.6 .6L8.4 8.4M8.4 .6L.6 8.4" stroke="#2b2b2b" stroke-width="1.2"/></svg>
<svg class="abs" style="left:10.7px;top:32.4px;" width="11.2" height="11.2" viewBox="0 0 11.2 11.2"><circle cx="1.0" cy="1.0" r="1.08" fill="#262626"/><circle cx="1.0" cy="5.6" r="1.08" fill="#262626"/><circle cx="1.0" cy="10.2" r="1.08" fill="#262626"/><circle cx="5.6" cy="1.0" r="1.08" fill="#262626"/><circle cx="5.6" cy="5.6" r="1.08" fill="#262626"/><circle cx="5.6" cy="10.2" r="1.08" fill="#262626"/><circle cx="10.2" cy="1.0" r="1.08" fill="#262626"/><circle cx="10.2" cy="5.6" r="1.08" fill="#262626"/><circle cx="10.2" cy="10.2" r="1.08" fill="#262626"/></svg>
<svg class="abs" style="left:43.0px;top:32.0px;" width="14.5" height="13" viewBox="0 0 14.5 13"><rect x="3.6" y=".3" width="10.6" height="12.4" rx="1" fill="#3a94e4"/><rect x="3.6" y="3.4" width="10.6" height="3.1" fill="#2b7cd3"/><rect x="3.6" y="6.5" width="10.6" height="3.1" fill="#185abd"/><rect x="3.6" y="9.6" width="10.6" height="3.1" fill="#103f91"/><rect x="0" y="2.3" width="8.4" height="8.4" rx=".8" fill="#1a56b8"/><text x="4.2" y="8.8" font-family="Liberation Sans" font-size="6.4" font-weight="700" fill="#fff" text-anchor="middle">W</text></svg>
<span class="t" style="left:73.6px;top:33.3px;font-size:10.5px;letter-spacing:-0.494px;">TeamMeeting</span>
<svg class="abs" style="left:140.0px;top:33.2px;" width="13" height="11" viewBox="0 0 13 11"><path d="M3.2 8.6 H2.8 A2.3 2.3 0 0 1 2.6 4 A3.4 3.4 0 0 1 9.2 3.2 A2.6 2.6 0 0 1 10.6 4.4" fill="none" stroke="#555" stroke-width=".9" stroke-linecap="round"/><circle cx="8.6" cy="7.6" r="2.9" fill="#13a10e"/><path d="M7.3 7.7 L8.3 8.7 L10 6.8" fill="none" stroke="#fff" stroke-width=".8"/></svg>
<div class="abs" style="left:174.0px;top:28.6px;width:322.6px;height:20.4px;background:#fafafa;border-radius:4px;box-shadow:0 0 1px rgba(0,0,0,.14),0 1px 2px rgba(0,0,0,.09)"></div>
<svg class="abs" style="left:185.0px;top:33.0px;" width="11" height="11" viewBox="0 0 11 11"><circle cx="6.4" cy="4.4" r="3.4" fill="none" stroke="#707070" stroke-width="1"/><path d="M3.9 6.9L.9 10" stroke="#707070" stroke-width="1.1" stroke-linecap="round"/></svg>
<span class="t" style="left:203.6px;top:33.7px;font-size:9.8px;color:#7a7a7a;letter-spacing:-0.083px;">Search for tools, help, and more (Alt + Q)</span>
<svg class="abs" style="left:564.5px;top:31.9px;" width="13" height="13" viewBox="0 0 13 13"><g transform="translate(6.5 6.5)"><path d="M-1.00 -4.18 L-0.71 -5.66 L0.71 -5.66 L1.00 -4.18 L2.25 -3.67 L3.49 -4.50 L4.50 -3.49 L3.67 -2.25 L4.18 -1.00 L5.66 -0.71 L5.66 0.71 L4.18 1.00 L3.67 2.25 L4.50 3.49 L3.49 4.50 L2.25 3.67 L1.00 4.18 L0.71 5.66 L-0.71 5.66 L-1.00 4.18 L-2.25 3.67 L-3.49 4.50 L-4.50 3.49 L-3.67 2.25 L-4.18 1.00 L-5.66 0.71 L-5.66 -0.71 L-4.18 -1.00 L-3.67 -2.25 L-4.50 -3.49 L-3.49 -4.50 L-2.25 -3.67Z" fill="none" stroke="#333" stroke-width="1.05" stroke-linejoin="round"/><circle r="1.9" fill="none" stroke="#333" stroke-width="1"/></g></svg>
<div class="abs" style="left:593.3px;top:27.3px;width:21.4px;height:21.4px;border-radius:50%;border:.9px solid #444;background:#f8f8f8"></div>
<span class="t" style="left:599.0px;top:34.6px;font-size:8.3px;color:#333;letter-spacing:-0.466px;">CS</span>
<span class="t" style="left:14.5px;top:62.1px;font-size:10.1px;color:#424242;letter-spacing:-0.441px;">File</span>
<span class="t" style="left:43.0px;top:62.1px;font-size:10.1px;font-weight:700;color:#1f1f1f;letter-spacing:-0.412px;">Home</span>
<span class="t" style="left:85.6px;top:62.1px;font-size:10.1px;color:#424242;letter-spacing:-0.258px;">Insert</span>
<span class="t" style="left:126.0px;top:62.1px;font-size:10.1px;color:#424242;letter-spacing:-0.352px;">Layout</span>
<span class="t" style="left:171.0px;top:62.1px;font-size:10.1px;color:#424242;letter-spacing:-0.562px;">References</span>
<span class="t" style="left:234.2px;top:62.1px;font-size:10.1px;color:#424242;letter-spacing:-0.718px;">Review</span>
<span class="t" style="left:280.0px;top:62.1px;font-size:10.1px;color:#424242;letter-spacing:-0.476px;">View</span>
<span class="t" style="left:316.6px;top:62.1px;font-size:10.1px;color:#424242;letter-spacing:-0.341px;">Help</span>
<div class="abs" style="left:43.0px;top:74.6px;width:26.4px;height:1.7px;background:#2b57b5;border-radius:1px"></div>
<div class="abs" style="left:389.6px;top:58.4px;width:65.0px;height:15.6px;background:#fff;border-radius:4px;border:1px solid #e3e3e3"></div>
<svg class="abs" style="left:395.0px;top:61.0px;" width="10.5" height="10" viewBox="0 0 10.5 10"><path d="M2 .6 H8.4 Q9.9 .6 9.9 2.1 V5.4 Q9.9 6.9 8.4 6.9 H5 L2.9 9 V6.9 H2 Q.6 6.9 .6 5.4 V2.1 Q.6 .6 2 .6Z" fill="none" stroke="#333" stroke-width=".9" stroke-linejoin="round"/></svg>
<span class="t" style="left:408.9px;top:61.7px;font-size:9.3px;color:#2a2a2a;letter-spacing:-0.694px;">Comments</span>
<div class="abs" style="left:461.2px;top:58.4px;width:22.0px;height:15.6px;background:#fff;border-radius:4px;border:1px solid #e3e3e3"></div>
<svg class="abs" style="left:466.5px;top:62.6px;" width="12" height="7" viewBox="0 0 12 7"><path d="M2.4 3.6 L4.3 1.2 L6.8 5.9 L8.4 3.6 H9.6" fill="none" stroke="#222" stroke-width="1" stroke-linejoin="round"/><circle cx="1.3" cy="3.6" r="1" fill="#222"/><circle cx="10.6" cy="3.6" r="1" fill="#222"/></svg>
<div class="abs" style="left:489.8px;top:58.4px;width:61.4px;height:15.6px;background:#fff;border-radius:4px;border:1px solid #e3e3e3"></div>
<svg class="abs" style="left:496.4px;top:61.4px;" width="9.5" height="9.5" viewBox="0 0 9.5 9.5"><path d="M6.4 1 L8.5 3.1 L3.2 8.4 L.8 8.8 L1.2 6.4Z" fill="none" stroke="#333" stroke-width=".9" stroke-linejoin="round"/></svg>
<span class="t" style="left:509.6px;top:61.7px;font-size:9.3px;color:#2a2a2a;letter-spacing:-0.577px;">Editing</span>
<svg class="abs" style="left:536.2px;top:61.4px;" width="10" height="10" viewBox="0 0 10 10"><path d="M1.7999999999999998 3.6999999999999997L5 6.8999999999999995L8.2 3.6999999999999997" fill="none" stroke="#333" stroke-width="1" stroke-linecap="round" stroke-linejoin="round"/></svg>
<div class="abs" style="left:557.2px;top:58.0px;width:58.0px;height:16.4px;background:#1b5cbe;border-radius:4px"></div>
<svg class="abs" style="left:564.0px;top:61.0px;" width="11" height="10" viewBox="0 0 11 10"><circle cx="4" cy="2.6" r="1.9" fill="none" stroke="#fff" stroke-width=".9"/><path d="M.6 9 V7.6 Q.6 6 2.2 6 H5.8 Q7.4 6 7.4 7.6 V9Z" fill="none" stroke="#fff" stroke-width=".9"/><circle cx="8.6" cy="3.4" r="1.3" fill="none" stroke="#fff" stroke-width=".8"/><path d="M8.6 6 H9.2 Q10.4 6 10.4 7.2 V8.4 H8.6" fill="none" stroke="#fff" stroke-width=".8"/></svg>
<span class="t" style="left:577.7px;top:61.8px;font-size:9.4px;color:#fff;letter-spacing:-0.946px;-webkit-text-stroke:.2px #fff;">Share</span>
<svg class="abs" style="left:599.7px;top:61.6px;" width="10" height="10" viewBox="0 0 10 10"><path d="M1.7999999999999998 3.6999999999999997L5 6.8999999999999995L8.2 3.6999999999999997" fill="none" stroke="#fff" stroke-width="1.1" stroke-linecap="round" stroke-linejoin="round"/></svg>
<div class="abs" style="left:6.4px;top:80.0px;width:608.8px;height:28.4px;background:#fff;border-radius:7px;box-shadow:0 0 2px rgba(0,0,0,.18),0 1px 3px rgba(0,0,0,.13)"></div>
<svg class="abs" style="left:17.4px;top:89.0px;" width="10" height="10" viewBox="0 0 10 10"><path d="M1.2 1 V4.6 H4.8" fill="none" stroke="#b5b5b5" stroke-width="1"/><path d="M1.4 4.4 Q4 1.4 7 2.6 Q9.6 4.2 8 7 Q7 8.4 4.4 9.4" fill="none" stroke="#b5b5b5" stroke-width="1"/></svg>
<svg class="abs" style="left:31.0px;top:89.0px;" width="10" height="10" viewBox="0 0 10 10"><path d="M1.7999999999999998 3.6999999999999997L5 6.8999999999999995L8.2 3.6999999999999997" fill="none" stroke="#424242" stroke-width="1" stroke-linecap="round" stroke-linejoin="round"/></svg>
<svg class="abs" style="left:49.6px;top:88.0px;" width="9" height="12" viewBox="0 0 9 12"><path d="M2.6 1.8 H1.4 Q.6 1.8 .6 2.6 V10.6 Q.6 11.4 1.4 11.4 H7.6 Q8.4 11.4 8.4 10.6 V2.6 Q8.4 1.8 7.6 1.8 H6.4" fill="none" stroke="#424242" stroke-width="1"/><rect x="2.6" y=".6" width="3.8" height="2.4" rx=".5" fill="none" stroke="#424242" stroke-width=".9"/></svg>
<svg class="abs" style="left:62.7px;top:89.0px;" width="10" height="10" viewBox="0 0 10 10"><path d="M1.7999999999999998 3.6999999999999997L5 6.8999999999999995L8.2 3.6999999999999997" fill="none" stroke="#424242" stroke-width="1" stroke-linecap="round" stroke-linejoin="round"/></svg>
<svg class="abs" style="left:82.0px;top:88.0px;" width="8.4" height="12" viewBox="0 0 8.4 12"><rect x=".6" y=".6" width="7.2" height="5" rx=".9" fill="#f7b456" stroke="#d98a1e" stroke-width=".9"/><path d="M2.2 5.8 V8 H6.2 V5.8 M4.2 8 V11" fill="none" stroke="#b8741a" stroke-width=".9"/></svg>
<div class="abs" style="left:99.2px;top:85.0px;width:1.0px;height:18.0px;background:#dcdcdc"></div>
<div class="abs" style="left:103.0px;top:83.6px;width:21.8px;height:20.8px;background:#ebebeb;border:1px solid #bdbdbd;border-radius:3.5px"></div>
<span class="t" style="left:109.6px;top:88.2px;font-size:12px;font-weight:700;color:#2a2a2a;">B</span>
<span class="t" style="left:133.6px;top:88.0px;font-size:12px;color:#424242;font-style:italic;font-family:Liberation Serif,serif;">I</span>
<span class="t" style="left:154.6px;top:88.7px;font-size:10px;color:#424242;">U</span>
<div class="abs" style="left:154.4px;top:99.0px;width:8.2px;height:1.0px;background:#424242"></div>
<div class="abs" style="left:172.4px;top:85.0px;width:1.0px;height:18.0px;background:#dcdcdc"></div>
<svg class="abs" style="left:181.4px;top:89.0px;" width="11" height="10" viewBox="0 0 11 10"><g stroke="#424242" stroke-width="1"><path d="M3.2 1.2 H10.8 M3.2 5 H10.8 M3.2 8.8 H10.8"/></g><g fill="#424242"><circle cx="1" cy="1.2" r=".9"/><circle cx="1" cy="5" r=".9"/><circle cx="1" cy="8.8" r=".9"/></g></svg>
<svg class="abs" style="left:195.6px;top:89.0px;" width="10" height="10" viewBox="0 0 10 10"><path d="M1.7999999999999998 3.6999999999999997L5 6.8999999999999995L8.2 3.6999999999999997" fill="none" stroke="#424242" stroke-width="1" stroke-linecap="round" stroke-linejoin="round"/></svg>
<svg class="abs" style="left:211.4px;top:89.0px;" width="12.4" height="10" viewBox="0 0 12.4 10"><g stroke="#424242" stroke-width="1"><path d="M0 1.2 H12.4 M2.4 5 H10 M1 8.8 H11.4"/></g></svg>
<svg class="abs" style="left:227.0px;top:89.0px;" width="10" height="10" viewBox="0 0 10 10"><path d="M1.7999999999999998 3.6999999999999997L5 6.8999999999999995L8.2 3.6999999999999997" fill="none" stroke="#424242" stroke-width="1" stroke-linecap="round" stroke-linejoin="round"/></svg>
<div class="abs" style="left:242.8px;top:85.0px;width:1.0px;height:18.0px;background:#dcdcdc"></div>
<div class="abs" style="left:246.0px;top:83.0px;width:86.2px;height:21.6px;background:#fff;border:1px solid #6e6e6e;border-radius:3px"></div>
<span class="t" style="left:250.4px;top:87.1px;font-size:14px;color:#1c4a6e;letter-spacing:-0.559px;">Heading 2</span>
<div class="abs" style="left:332.0px;top:83.6px;width:12.0px;height:20.6px;background:#fff;border:1px solid #e0e0e0;border-left:none;border-radius:0 3px 3px 0"></div>
<svg class="abs" style="left:332.2px;top:89.0px;" width="10" height="10" viewBox="0 0 10 10"><path d="M1.7999999999999998 3.6999999999999997L5 6.8999999999999995L8.2 3.6999999999999997" fill="none" stroke="#424242" stroke-width="1" stroke-linecap="round" stroke-linejoin="round"/></svg>
<div class="abs" style="left:346.6px;top:85.0px;width:1.0px;height:18.0px;background:#dcdcdc"></div>
<svg class="abs" style="left:355.6px;top:89.0px;" width="10" height="10" viewBox="0 0 10 10"><circle cx="4" cy="4" r="3.2" fill="none" stroke="#424242" stroke-width="1"/><path d="M6.4 6.4L9.4 9.4" stroke="#424242" stroke-width="1.1" stroke-linecap="round"/></svg>
<svg class="abs" style="left:369.0px;top:89.0px;" width="10" height="10" viewBox="0 0 10 10"><path d="M1.7999999999999998 3.6999999999999997L5 6.8999999999999995L8.2 3.6999999999999997" fill="none" stroke="#424242" stroke-width="1" stroke-linecap="round" stroke-linejoin="round"/></svg>
<div class="abs" style="left:384.6px;top:85.0px;width:1.0px;height:18.0px;background:#dcdcdc"></div>
<svg class="abs" style="left:393.4px;top:87.5px;" width="9" height="13" viewBox="0 0 9 13"><rect x="2.3" y=".3" width="4.4" height="8" rx="2.2" fill="#3f86d6"/><path d="M.6 5.6 Q.6 9.8 4.5 9.8 Q8.4 9.8 8.4 5.6 M4.5 9.8 V12.4" fill="none" stroke="#6b7f99" stroke-width=".9"/></svg>
<svg class="abs" style="left:406.3px;top:89.0px;" width="10" height="10" viewBox="0 0 10 10"><path d="M1.7999999999999998 3.6999999999999997L5 6.8999999999999995L8.2 3.6999999999999997" fill="none" stroke="#424242" stroke-width="1" stroke-linecap="round" stroke-linejoin="round"/></svg>
<div class="abs" style="left:422.0px;top:85.0px;width:1.0px;height:18.0px;background:#dcdcdc"></div>
<svg class="abs" style="left:430.4px;top:87.0px;" width="13" height="13" viewBox="0 0 13 13"><path d="M7.6 3.6 L9.8 5.8 L3.6 12 L1 12.4 L1.4 9.8Z" fill="none" stroke="#3a3a3a" stroke-width=".9" stroke-linejoin="round"/><path d="M5.4 5.6 L7.8 8" stroke="#3a3a3a" stroke-width=".8"/><path d="M9.6 .8 L12.2 3.4 M12.2 .8 L9.6 3.4" stroke="#4d86d9" stroke-width=".9"/></svg>
<svg class="abs" style="left:445.0px;top:89.0px;" width="10" height="10" viewBox="0 0 10 10"><path d="M1.7999999999999998 3.6999999999999997L5 6.8999999999999995L8.2 3.6999999999999997" fill="none" stroke="#424242" stroke-width="1" stroke-linecap="round" stroke-linejoin="round"/></svg>
<svg class="abs" style="left:467.6px;top:92.5px;" width="13" height="3" viewBox="0 0 13 3"><circle cx="1.4" cy="1.5" r="1" fill="#333"/><circle cx="6.5" cy="1.5" r="1" fill="#333"/><circle cx="11.6" cy="1.5" r="1" fill="#333"/></svg>
<div class="abs" style="left:488.2px;top:85.0px;width:1.0px;height:18.0px;background:#dcdcdc"></div>
<svg class="abs" style="left:599.6px;top:92.8px;" width="10" height="10" viewBox="0 0 10 10"><path d="M1.6 3.5999999999999996L5 7.0L8.4 3.5999999999999996" fill="none" stroke="#333" stroke-width="1" stroke-linecap="round" stroke-linejoin="round"/></svg>
<div class="abs" style="left:0.0px;top:111.0px;width:621.0px;height:424.0px;background:#f3f3f3"></div>
<div class="abs" style="left:21.6px;top:121.0px;width:567.4px;height:408.0px;background:#fff;border:1px solid #dadada;border-bottom:none"></div>
<div class="abs" style="left:6.2px;top:116.6px;width:26.6px;height:26.4px;background:#fff;border-radius:5px;box-shadow:0 0 2px rgba(0,0,0,.15),0 1px 3px rgba(0,0,0,.12)"></div>
<svg class="abs" style="left:15.2px;top:125.0px;" width="9.4" height="9.4" viewBox="0 0 9.4 9.4"><rect x=".6" y=".6" width="8.2" height="8.2" rx="1.6" fill="none" stroke="#4a5a70" stroke-width=".9"/><path d="M.6 2 Q.6 .6 2 .6 H3.2 V8.8 H2 Q.6 8.8 .6 7.4Z" fill="#9db7dd"/></svg>
<div class="abs" style="left:612.0px;top:111.6px;width:4.4px;height:109.0px;background:#6f6f6f;border-radius:2.2px"></div>
<span class="t" style="left:88.5px;top:204.5px;font-size:16px;font-weight:700;color:#17455f;letter-spacing:-0.126px;">Meeting Minutes: Project Phoenix</span>
<span class="t" style="left:88.5px;top:239.1px;font-size:11px;font-weight:700;color:#1a1a1a;letter-spacing:-0.292px;">Meeting:</span>
<span class="t" style="left:134.4px;top:239.1px;font-size:11px;color:#1a1a1a;letter-spacing:-0.213px;">&quot;Project Phoenix&quot; Feature Release</span>
<span class="t" style="left:88.5px;top:265.1px;font-size:11px;font-weight:700;color:#1a1a1a;letter-spacing:-0.183px;">Date:</span>
<span class="t" style="left:118.1px;top:265.1px;font-size:11px;color:#1a1a1a;letter-spacing:-0.294px;">February 18, 2025</span>
<span class="t" style="left:88.5px;top:290.5px;font-size:11px;font-weight:700;color:#1a1a1a;letter-spacing:-0.348px;">Time:</span>
<span class="t" style="left:118.9px;top:290.5px;font-size:11px;color:#1a1a1a;letter-spacing:-0.416px;">10:00 AM - 11:00 AM PST</span>
<span class="t" style="left:88.5px;top:316.2px;font-size:11px;font-weight:700;color:#1a1a1a;letter-spacing:-0.333px;">Location:</span>
<span class="t" style="left:138.0px;top:316.2px;font-size:11px;color:#1a1a1a;letter-spacing:-0.078px;">Virtual Meeting</span>
<span class="t" style="left:88.5px;top:341.7px;font-size:11px;font-weight:700;color:#1a1a1a;letter-spacing:-0.314px;">1. Opening and Introductions (10:00 AM - 10:05 AM)</span>
<div class="abs" style="left:105.6px;top:371.3px;width:4.2px;height:4.2px;background:#111;border-radius:50%"></div>
<span class="t" style="left:122.0px;top:367.8px;font-size:11px;color:#1a1a1a;letter-spacing:-0.133px;">John Smith opened the meeting, welcoming all attendees.</span>
<div class="abs" style="left:105.6px;top:385.8px;width:4.2px;height:4.2px;background:#111;border-radius:50%"></div>
<span class="t" style="left:122.0px;top:382.3px;font-size:11px;color:#1a1a1a;letter-spacing:-0.090px;">Brief introductions were made, confirming everyone&#39;s role in the demo recording</span>
<span class="t" style="left:122.0px;top:396.6px;font-size:11px;color:#1a1a1a;letter-spacing:-0.247px;">process.</span>
<div class="abs" style="left:105.6px;top:414.6px;width:4.2px;height:4.2px;background:#111;border-radius:50%"></div>
<span class="t" style="left:122.0px;top:411.1px;font-size:11px;color:#1a1a1a;letter-spacing:-0.086px;">John outlined the purpose of the meeting: to finalize the script and technical setup</span>
<span class="t" style="left:122.0px;top:425.1px;font-size:11px;color:#1a1a1a;letter-spacing:-0.142px;">for the &quot;Project Phoenix&quot; feature demo recording.</span>
<span class="t" style="left:88.5px;top:450.7px;font-size:11px;font-weight:700;color:#1a1a1a;letter-spacing:-0.300px;">2. Script Review and Finalization (10:05 AM - 10:25 AM)</span>
<div class="abs" style="left:105.6px;top:480.0px;width:4.2px;height:4.2px;background:#111;border-radius:50%"></div>
<span class="t" style="left:122.0px;top:476.5px;font-size:11px;color:#1a1a1a;letter-spacing:-0.153px;">Sarah Jones presented the draft script for the demo recording.</span>
<div class="abs" style="left:105.6px;top:494.5px;width:4.2px;height:4.2px;background:#111;border-radius:50%"></div>
<span class="t" style="left:122.0px;top:491.0px;font-size:11px;color:#1a1a1a;letter-spacing:-0.103px;">Attendees reviewed the script, focusing on:</span>
<span class="t" style="left:138.6px;top:505.5px;font-size:11px;color:#1a1a1a;font-family:Liberation Mono,monospace;">o</span>
<span class="t" style="left:155.0px;top:505.5px;font-size:11px;color:#1a1a1a;letter-spacing:-0.174px;">Clarity and conciseness of language.</span>
<span class="t" style="left:138.6px;top:521.5px;font-size:11px;color:#1a1a1a;font-family:Liberation Mono,monospace;">o</span>
<span class="t" style="left:155.0px;top:521.5px;font-size:11px;color:#1a1a1a;letter-spacing:-0.190px;">Accuracy of technical information.</span>
<div class="abs" style="left:0.0px;top:525.6px;width:621.0px;height:10.0px;background:#f3f3f3"></div>
<div class="abs" style="left:3.5px;top:528.8px;width:594.0px;height:3.8px;background:#727272;border-radius:1.9px"></div>
<div class="abs" style="left:0.0px;top:535.4px;width:621.0px;height:20.0px;background:#f3f3f3"></div>
<span class="t" style="left:11.0px;top:542.6px;font-size:8px;color:#6b6b6b;letter-spacing:0.007px;">Page 1 of 2</span>
<span class="t" style="left:59.0px;top:542.6px;font-size:8px;color:#6b6b6b;letter-spacing:0.231px;">445 words</span>
<span class="t" style="left:104.0px;top:542.6px;font-size:8px;color:#6b6b6b;letter-spacing:-0.240px;">English (U.S.)</span>
<div class="abs" style="left:288.0px;top:537.6px;width:26.0px;height:17.0px;background:#e0e0e0;border-radius:2px"></div>
<svg class="abs" style="left:297.4px;top:541.6px;" width="7" height="9" viewBox="0 0 7 9"><path d="M.6 .6 H4.4 L6.4 2.6 V8.4 H.6Z" fill="#fff" stroke="#333" stroke-width=".9" stroke-linejoin="round"/></svg>
<div class="abs" style="left:324.5px;top:546.2px;width:8.5px;height:1.0px;background:#555"></div>
<div class="abs" style="left:348.4px;top:545.9px;width:14.0px;height:1.6px;background:#2b6bc8"></div>
<div class="abs" style="left:362.0px;top:546.2px;width:59.4px;height:1.0px;background:#777"></div>
<div class="abs" style="left:361.2px;top:543.2px;width:7.0px;height:7.0px;background:#1f5fc0;border-radius:50%"></div>
<svg class="abs" style="left:436.0px;top:542.2px;" width="9" height="9" viewBox="0 0 9 9"><path d="M4.5 0 V9 M0 4.5 H9" stroke="#444" stroke-width="1"/></svg>
<span class="t" style="left:458.0px;top:542.6px;font-size:8px;color:#6b6b6b;letter-spacing:-0.467px;">100%</span>
<svg class="abs" style="left:481.6px;top:542.8px;" width="8" height="7.4" viewBox="0 0 8 7.4"><path d="M.5 2.4 V.5 H2.6 M5.4 .5 H7.5 V2.4 M7.5 5 V6.9 H5.4 M2.6 6.9 H.5 V5" fill="none" stroke="#555" stroke-width=".9"/></svg>
<span class="t" style="left:493.0px;top:542.6px;font-size:8px;color:#6b6b6b;letter-spacing:-0.030px;">Fit</span>
<span class="t" style="left:508.6px;top:542.6px;font-size:8px;color:#6b6b6b;letter-spacing:0.101px;">Give Feedback to Microsoft</span>
</div>

<div id="shelf">
<div class="abs" style="left:4.0px;top:4.0px;width:26.0px;height:26.0px;border-radius:13px;background:#e3e8ee"></div>
<svg class="abs" style="left:10.0px;top:10.0px;" width="14" height="14" viewBox="0 0 14 14"><circle cx="7" cy="7" r="4.6" fill="none" stroke="#2a2a2e" stroke-width="1.6"/></svg>
<svg class="abs" style="left:482.0px;top:4.5px;" width="23.4" height="23.4" viewBox="0 0 100 100"><circle cx="50" cy="50" r="50" fill="#fff"/>
<path d="M50 50 L6.7 25 A50 50 0 0 1 93.3 25 Z" fill="#ea4335"/>
<path d="M50 50 L93.3 25 A50 50 0 0 1 50 100 Z" fill="#fbbc04"/>
<path d="M50 50 L50 100 A50 50 0 0 1 6.7 25 Z" fill="#34a853"/>
<circle cx="50" cy="50" r="23" fill="#fff"/><circle cx="50" cy="50" r="18" fill="#1a73e8"/></svg>
<div class="abs" style="left:521.8px;top:4.8px;width:22.8px;height:22.8px;border-radius:50%;background:#fdfdfd"></div>
<div class="abs" style="left:526.6px;top:10.0px;width:6.2px;height:6.2px;background:#f25022"></div>
<div class="abs" style="left:533.8px;top:10.0px;width:6.2px;height:6.2px;background:#7fba00"></div>
<div class="abs" style="left:526.6px;top:17.2px;width:6.2px;height:6.2px;background:#00a4ef"></div>
<div class="abs" style="left:533.8px;top:17.2px;width:6.2px;height:6.2px;background:#ffb900"></div>
<div class="abs" style="left:560.6px;top:4.8px;width:23.0px;height:23.0px;border-radius:50%;background:#1a73e8"></div>
<svg class="abs" style="left:565.0px;top:10.5px;" width="14" height="12" viewBox="0 0 14 12"><path d="M0 1.2 Q0 0 1.2 0 H5 L6.6 1.8 H12.8 Q14 1.8 14 3 V10.6 Q14 11.8 12.8 11.8 H1.2 Q0 11.8 0 10.6 Z" fill="#7fe9f0"/></svg>
<div class="abs" style="left:492.5px;top:31.0px;width:3.4px;height:1.8px;border-radius:1px;background:#8a9199"></div>
<div class="abs" style="left:528.7px;top:31.0px;width:9.4px;height:1.8px;border-radius:1px;background:#30343a"></div>
<div class="abs" style="left:570.8px;top:31.0px;width:3.4px;height:1.8px;border-radius:1px;background:#8a9199"></div>
<div class="abs" style="left:872.6px;top:4.6px;width:35.6px;height:24.6px;border-radius:12.3px;background:#f3f5f8"></div>
<div class="abs" style="left:888.5px;top:15.5px;width:5.5px;height:4.0px;border-radius:2px;background:#3a5fc0"></div>
<div class="abs" style="left:914.4px;top:4.6px;width:28.6px;height:25.0px;border-radius:12.5px 3px 3px 12.5px;background:#dce2e9"></div>
<div class="abs" style="left:922.7px;top:11.9px;width:11.2px;height:11.2px;border-radius:50%;background:#17181a"></div>
<span class="t" style="left:926.8px;top:14.7px;font-size:7.5px;font-weight:700;color:#fff;">1</span>
<div class="abs" style="left:945.7px;top:4.6px;width:47.9px;height:25.0px;border-radius:3px;background:#dce2e9"></div>
<span class="t" style="left:955.0px;top:12.4px;font-size:10.5px;color:#1c1d1f;letter-spacing:-0.551px;-webkit-text-stroke:.25px #1c1d1f;">Feb 27</span>
<div class="abs" style="left:996.4px;top:4.6px;width:65.6px;height:25.0px;border-radius:3px 12.5px 12.5px 3px;background:#dce2e9"></div>
<span class="t" style="left:1005.2px;top:12.4px;font-size:10.5px;color:#1c1d1f;letter-spacing:-0.559px;-webkit-text-stroke:.25px #1c1d1f;">4:02</span>
<svg class="abs" style="left:1029.6px;top:12.5px;" width="11.2" height="9.6" viewBox="0 0 11.2 9.6"><path d="M5.6 9.4 L0.2 2.7 A8.6 8.6 0 0 1 11 2.7 Z" fill="#1c1d1f"/></svg>
<svg class="abs" style="left:1046.2px;top:12.0px;" width="6.8" height="10.6" viewBox="0 0 6.8 10.6"><path d="M2 0 H4.8 V1.2 H6 Q6.8 1.2 6.8 2 V9.8 Q6.8 10.6 6 10.6 H0.8 Q0 10.6 0 9.8 V2 Q0 1.2 0.8 1.2 H2 Z" fill="#1c1d1f"/></svg>
</div>
</body></html>
